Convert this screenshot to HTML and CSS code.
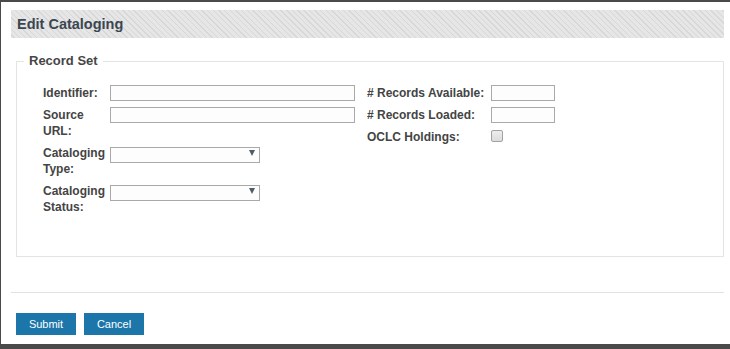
FILE: index.html
```html
<!DOCTYPE html>
<html lang="en">
<head>
    <meta charset="UTF-8">
    <title>Edit Cataloging</title>
    <link rel="stylesheet" href="styles.css">
</head>
<body>
    <div class="page">
        <div class="header">
            <h1>Edit Cataloging</h1>
        </div>
        <form>
            <fieldset>
                <legend>Record Set</legend>
                <div class="cols">
                    <div class="col col-left">
                        <div class="row">
                            <label>Identifier:</label>
                            <input type="text" class="wide">
                        </div>
                        <div class="row">
                            <label>Source URL:</label>
                            <input type="text" class="wide">
                        </div>
                        <div class="row">
                            <label>Cataloging Type:</label>
                            <div class="select"><select></select></div>
                        </div>
                        <div class="row">
                            <label>Cataloging Status:</label>
                            <div class="select"><select></select></div>
                        </div>
                    </div>
                    <div class="col col-right">
                        <div class="row">
                            <label>#&nbsp;Records Available:</label>
                            <input type="text" class="short">
                        </div>
                        <div class="row">
                            <label># Records Loaded:</label>
                            <input type="text" class="short">
                        </div>
                        <div class="row">
                            <label>OCLC Holdings:</label>
                            <input type="checkbox" class="check">
                        </div>
                    </div>
                </div>
            </fieldset>
            <hr>
            <div class="actions">
                <button type="button">Submit</button>
                <button type="button">Cancel</button>
            </div>
        </form>
    </div>
</body>
</html>
```

FILE: styles.css
```css
body {
    margin: 0;
    padding: 0;
    background: #4a4a4a;
    font-family: "Liberation Sans", Arial, sans-serif;
    color: #444;
}
.page {
    box-sizing: border-box;
    margin: 2px 0 0 1px;
    height: 342px;
    padding: 8px 6px 0 10px;
    background: #fff;
}
.header {
    height: 28px;
    background: repeating-linear-gradient(45deg, #e6e6e6 0, #e6e6e6 2px, #d7d7d7 2px, #d7d7d7 3px, #e6e6e6 3px, #e6e6e6 4px);
}
.header h1 {
    margin: 0;
    padding-left: 6px;
    font-size: 14.5px;
    line-height: 28px;
    color: #3b4651;
}
fieldset {
    margin: 15px 0 0 5px;
    padding: 0;
    border: 1px solid #e4e4e4;
}
legend {
    margin-left: 7px;
    padding: 0 5px;
    font-size: 13px;
    font-weight: bold;
    line-height: 16px;
    color: #464646;
}
.cols {
    display: flex;
    padding: 16px 0 41px 26px;
}
.col {
    display: flex;
    flex-direction: column;
    gap: 6px;
}
.col-left {
    width: 312px;
    margin-right: 12px;
}
.row {
    display: flex;
    align-items: flex-start;
}
.row label {
    font-size: 12px;
    font-weight: bold;
    line-height: 16px;
    color: #444;
}
.col-left label {
    width: 67px;
    flex: none;
}
.col-right label {
    width: 124px;
    flex: none;
    white-space: nowrap;
}
input[type="text"], select {
    box-sizing: border-box;
    height: 16px;
    margin: 0;
    padding: 0 3px;
    border: 1px solid #a9a9a9;
    background: #fdfdfd;
    font-size: 11px;
}
.wide {
    width: 245px;
}
.short {
    width: 64px;
}
.select {
    position: relative;
    width: 150px;
    height: 16px;
}
.select select {
    width: 150px;
    appearance: none;
    -webkit-appearance: none;
    border-radius: 0;
}
.select::after {
    content: "";
    position: absolute;
    right: 5px;
    top: 5px;
    border-left: 3.5px solid transparent;
    border-right: 3.5px solid transparent;
    border-top: 6px solid #525c64;
    pointer-events: none;
}
.check {
    appearance: none;
    -webkit-appearance: none;
    box-sizing: border-box;
    width: 12px;
    height: 12px;
    margin: 1px 0 0 0;
    border: 1px solid #a2a2a2;
    border-radius: 2px;
    background: linear-gradient(#ededed, #dcdcdc);
}
hr {
    margin: 35px 0 0 0;
    border: none;
    border-top: 1px solid #e2e2e2;
}
.actions {
    display: flex;
    gap: 8px;
    margin: 20px 0 0 5px;
}
.actions button {
    width: 60px;
    height: 22px;
    padding: 0;
    border: none;
    border-radius: 0;
    background: #1c76a9;
    color: #fff;
    font-family: "Liberation Sans", Arial, sans-serif;
    font-size: 11px;
    cursor: pointer;
}
```
